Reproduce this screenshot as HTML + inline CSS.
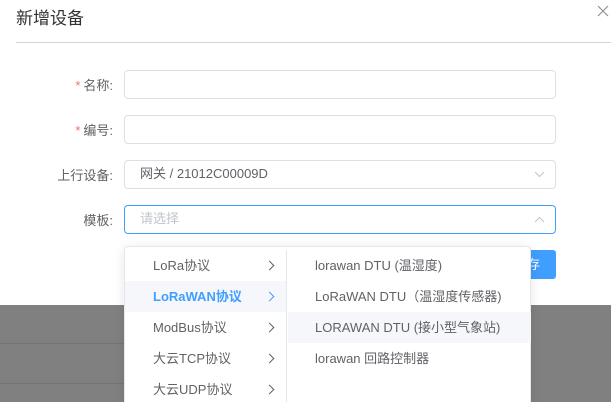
<!DOCTYPE html>
<html><head><meta charset="utf-8"><style>
*{margin:0;padding:0;box-sizing:border-box}
html,body{width:611px;height:402px;overflow:hidden}
body{position:relative;background:#808080;font-family:"Liberation Sans","Noto Sans CJK SC",sans-serif;font-size:13px;color:#606266}
.dlg{position:absolute;left:0;top:0;width:611px;height:305px;background:#fff}
.title{position:absolute;left:16px;top:4px;font-size:17px;color:#303133}
.close{position:absolute;left:597px;top:5px;width:12px;height:12px}
.hr{position:absolute;left:16px;right:0;top:42px;height:1px;background:#d4d4d8}
.lab{position:absolute;right:498px;font-size:13px;color:#606266;white-space:nowrap}
.lab b{color:#f56c6c;font-weight:normal;margin-right:3px}
.inp{position:absolute;left:124px;width:432px;height:29px;border:1px solid #dcdfe6;border-radius:4px;padding-left:15px;line-height:26px}
.line{position:absolute;left:0;width:372px;height:1px;background:#747474}
.dd{position:absolute;left:124px;top:246px;width:407px;height:170px;background:#fff;border:1px solid #e4e7ed;border-radius:4px;box-shadow:0 2px 12px rgba(0,0,0,.1)}
.col1{position:absolute;left:0;top:3px;width:162px;height:170px;border-right:1px solid #e4e7ed}
.col2{position:absolute;left:163px;top:3px;width:243px}
.it{height:31px;line-height:31px;padding-left:28px;position:relative;color:#606266;white-space:nowrap}
.col2 .it{padding-left:27px}
.it.act{background:#f5f7fa}
.it.sel{color:#409eff;font-weight:bold}
.arr{position:absolute;left:141px;top:12px;width:7px;height:7px;border-right:1px solid #606266;border-top:1px solid #606266;transform:rotate(45deg)}
.sel .arr{border-color:#409eff}
.btn{position:absolute;left:520px;top:250px;width:36px;height:29px;background:#409eff;border-radius:3px;color:#fff;line-height:29px;padding-left:7px}
</style></head><body>
<div class="line" style="top:343px"></div>
<div class="line" style="top:383px"></div>
<div class="dlg">
<div class="title">新增设备</div>
<svg class="close" viewBox="0 0 12 12"><path d="M1 1L11 11M11 1L1 11" stroke="#909399" stroke-width="1.2"/></svg>
<div class="hr"></div>
<div class="lab" style="top:75px"><b>*</b>名称:</div>
<div class="inp" style="top:70px"></div>
<div class="lab" style="top:120px"><b>*</b>编号:</div>
<div class="inp" style="top:115px"></div>
<div class="lab" style="top:165px">上行设备:</div>
<div class="inp" style="top:160px">网关 / 21012C00009D<svg style="position:absolute;right:10px;top:10px" width="11" height="7" viewBox="0 0 11 7"><path d="M1 1L5.5 5.5L10 1" fill="none" stroke="#c0c4cc"/></svg></div>
<div class="lab" style="top:210px">模板:</div>
<div class="inp" style="top:205px;border-color:#409eff;color:#c0c4cc">请选择<svg style="position:absolute;right:10px;top:10px" width="11" height="7" viewBox="0 0 11 7"><path d="M1 6L5.5 1.5L10 6" fill="none" stroke="#c0c4cc"/></svg></div>
<div class="btn">存</div>
</div>
<div class="dd">
<div class="col1">
<div class="it">LoRa协议<span class="arr"></span></div>
<div class="it act sel">LoRaWAN协议<span class="arr"></span></div>
<div class="it">ModBus协议<span class="arr"></span></div>
<div class="it">大云TCP协议<span class="arr"></span></div>
<div class="it">大云UDP协议<span class="arr"></span></div>
</div>
<div class="col2">
<div class="it">lorawan DTU (温湿度)</div>
<div class="it">LoRaWAN DTU（温湿度传感器)</div>
<div class="it act">LORAWAN DTU (接小型气象站)</div>
<div class="it">lorawan 回路控制器</div>
</div>
</div>
</body></html>
